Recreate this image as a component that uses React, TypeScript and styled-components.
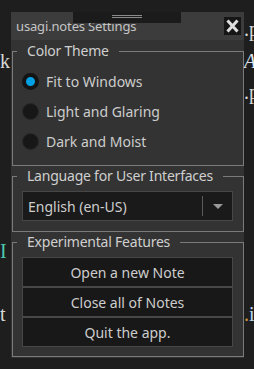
import React from "react";
import styled, { createGlobalStyle } from "styled-components";

const GlobalStyle = createGlobalStyle`
  html, body { margin: 0; padding: 0; background: #1e1e1e; }
  body { width: 254px; height: 369px; overflow: hidden; }
  * { box-sizing: border-box; }
`;

const Screen = styled.div`
  position: relative;
  width: 254px;
  height: 369px;
  overflow: hidden;
  background: #1e1e1e;
`;

const Editor = styled.div`
  padding-top: 14px;
  font-family: "Liberation Serif", serif;
  font-size: 20px;
  line-height: 31.7px;
  color: #d8d8d8;
`;

const Line = styled.div`
  display: flex;
  height: 31.7px;
  white-space: pre;
`;

const LeftPart = styled.span`
  width: 244px;
  flex: none;
  overflow: hidden;
`;

const RightPart = styled.span`
  flex: 1;
`;

const Token = styled.span<{ $color?: string; $italic?: boolean }>`
  color: ${(p) => p.$color ?? "inherit"};
  font-style: ${(p) => (p.$italic ? "italic" : "normal")};
`;

const Window = styled.div`
  position: absolute;
  left: 11px;
  top: 12px;
  width: 233px;
  height: 346px;
  background: #333333;
  display: flex;
  flex-direction: column;
  font-family: "Noto Sans", sans-serif;
  color: #cdcdcd;
`;

const TitleBar = styled.div`
  position: relative;
  height: 28px;
  flex: none;
  background: #3c3c3c;
  display: flex;
  align-items: center;
  padding: 0 3px 0 5px;
`;

const TitleText = styled.span`
  flex: 1;
  font-size: 13px;
  color: #c4c4c4;
  letter-spacing: -0.15px;
`;

const Grip = styled.div`
  position: absolute;
  left: 62px;
  top: 0;
  width: 108px;
  height: 11px;
  background: #1b1b1b;
  display: flex;
  flex-direction: column;
  align-items: center;
  padding-top: 3px;
  gap: 1px;
`;

const GripLine = styled.div`
  width: 30px;
  height: 1px;
  background: #8a8a8a;
`;

const CloseButton = styled.button`
  width: 17px;
  height: 18px;
  padding: 0;
  border: none;
  background: #161616;
  display: flex;
  align-items: center;
  justify-content: center;
`;

const Body = styled.div`
  flex: 1;
  display: flex;
  flex-direction: column;
  padding: 1px 0 0 1px;
`;

const Group = styled.fieldset<{ $pb: number }>`
  margin: 0;
  min-width: 0;
  border: 1px solid #7b7b7b;
  padding: 5px 10px ${(p) => p.$pb}px 9px;
`;

const Legend = styled.legend`
  margin-left: -5px;
  padding: 0 10px;
  font-size: 14px;
  line-height: 20px;
  height: 20px;
  letter-spacing: -0.22px;
  color: #cfcfcf;
`;

const RadioRow = styled.label`
  height: 30px;
  display: flex;
  align-items: center;
  gap: 7px;
  font-size: 14px;
`;

const RadioDot = styled.span<{ $checked: boolean }>`
  width: 17px;
  height: 17px;
  flex: none;
  border-radius: 50%;
  background: ${(p) => (p.$checked ? "#00a0e4" : "#171717")};
  border: ${(p) => (p.$checked ? "4px solid #141414" : "1px solid #282828")};
`;

const Select = styled.div`
  height: 30px;
  border: 1px solid #474747;
  background: #1a1a1a;
  display: flex;
  align-items: center;
  padding-left: 5px;
  font-size: 14px;
`;

const SelectText = styled.span`
  flex: 1;
`;

const SelectDivider = styled.span`
  width: 1px;
  height: 20px;
  background: #5a5a5a;
`;

const ArrowBox = styled.span`
  width: 29px;
  height: 100%;
  display: flex;
  align-items: center;
  justify-content: center;
`;

const Arrow = styled.span`
  width: 0;
  height: 0;
  border-left: 5px solid transparent;
  border-right: 5px solid transparent;
  border-top: 5px solid #9a9a9a;
`;

const ButtonStack = styled.div`
  display: flex;
  flex-direction: column;
`;

const ActionButton = styled.button`
  height: 30px;
  padding: 0;
  border: 1px solid #474747;
  background: #181818;
  color: #cdcdcd;
  font-family: "Noto Sans", sans-serif;
  font-size: 14px;
`;

const themes = [
  { label: "Fit to Windows", checked: true },
  { label: "Light and Glaring", checked: false },
  { label: "Dark and Moist", checked: false },
];

const actions = ["Open a new Note", "Close all of Notes", "Quit the app."];

export default function App() {
  return (
    <Screen>
      <GlobalStyle />
      <Editor>
        <Line>
          <LeftPart />
          <RightPart>.p</RightPart>
        </Line>
        <Line>
          <LeftPart>k</LeftPart>
          <RightPart>
            <Token $italic $color="#dfe6f0">A</Token>
          </RightPart>
        </Line>
        <Line>
          <LeftPart />
          <RightPart>.p</RightPart>
        </Line>
        <Line />
        <Line />
        <Line />
        <Line />
        <Line>
          <LeftPart>
            <Token $color="#4ec9b0">I</Token>
          </LeftPart>
        </Line>
        <Line />
        <Line>
          <LeftPart>t</LeftPart>
          <RightPart>
            <Token $color="#d7952e">.</Token>
            <Token $color="#bcd6f2">i</Token>
          </RightPart>
        </Line>
      </Editor>
      <Window>
        <TitleBar>
          <TitleText>usagi.notes Settings</TitleText>
          <Grip>
            <GripLine />
            <GripLine />
          </Grip>
          <CloseButton aria-label="Close">
            <svg width="17" height="18" viewBox="0 0 17 18">
              <path d="M3.5 3.5 L13.5 14.5 M13.5 3.5 L3.5 14.5" stroke="#dedede" strokeWidth="3" />
            </svg>
          </CloseButton>
        </TitleBar>
        <Body>
          <Group $pb={9}>
            <Legend>Color Theme</Legend>
            {themes.map((t) => (
              <RadioRow key={t.label}>
                <RadioDot $checked={t.checked} />
                {t.label}
              </RadioRow>
            ))}
          </Group>
          <Group $pb={10}>
            <Legend>Language for User Interfaces</Legend>
            <Select>
              <SelectText>English (en-US)</SelectText>
              <SelectDivider />
              <ArrowBox>
                <Arrow />
              </ArrowBox>
            </Select>
          </Group>
          <Group $pb={9}>
            <Legend>Experimental Features</Legend>
            <ButtonStack>
              {actions.map((a) => (
                <ActionButton key={a}>{a}</ActionButton>
              ))}
            </ButtonStack>
          </Group>
        </Body>
      </Window>
    </Screen>
  );
}
